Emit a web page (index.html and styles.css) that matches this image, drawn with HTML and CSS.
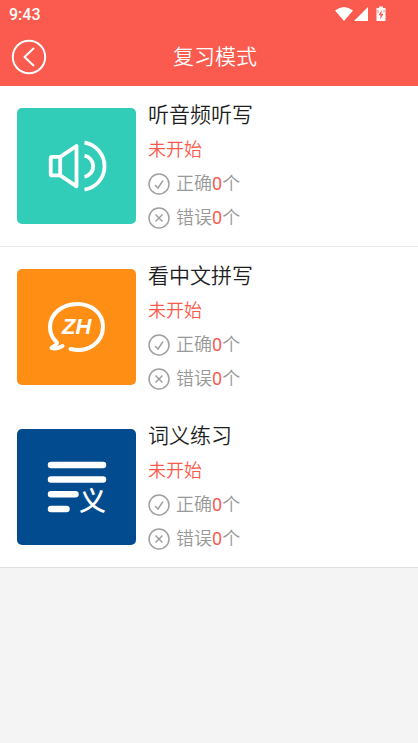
FILE: index.html
```html
<!DOCTYPE html>
<html lang="zh-CN">
<head>
<meta charset="utf-8">
<meta name="viewport" content="width=device-width, initial-scale=1">
<title>复习模式</title>
<link rel="stylesheet" href="styles.css">
</head>
<body>
<header class="header">
  <div class="status-bar">
    <span class="clock">9:43</span>
    <svg class="status-icons" width="54" height="18" viewBox="0 0 54 18" aria-hidden="true">
      <path d="M0 5.500Q9 -1.500 18 5.500L9 16Z" fill="#fff"/>
      <path d="M33 2V16H19Z" fill="#fff"/>
      <path d="M44 1.500h4v1.500h2.500v13h-9v-13H44Z" fill="#fff"/>
      <path d="M46.800 5L43.500 10.200h2.200L45 14.500L48.500 9h-2.200Z" fill="#fa5b4e"/>
      <path d="M43 5v3M49 5v2" stroke="#fa5b4e" stroke-width="0.800"/>
    </svg>
  </div>
  <div class="title-bar">
    <button class="back" type="button" aria-label="返回">
      <svg width="36" height="36" viewBox="0 0 36 36" fill="none" stroke="#fff" stroke-width="2" stroke-linecap="round" stroke-linejoin="round" aria-hidden="true">
        <circle cx="18" cy="18" r="16.200"/>
        <path d="M22.500 9.500L13.500 18L22.500 26.500"/>
      </svg>
    </button>
    <h1 class="title">复习模式</h1>
  </div>
</header>

<svg class="defs" aria-hidden="true">
  <symbol id="right" viewBox="0 0 22 22">
    <circle cx="11" cy="11" r="10"/>
    <path d="M7 12L10 15L15 7.500"/>
  </symbol>
  <symbol id="wrong" viewBox="0 0 22 22">
    <circle cx="11" cy="11" r="10"/>
    <path d="M7.500 7.500L14.500 14.500M14.500 7.500L7.500 14.500"/>
  </symbol>
</svg>

<main class="modes">
  <a class="mode mode-divided" href="#listen">
    <div class="tile tile-teal">
      <svg width="60" height="56" viewBox="0 0 60 56" fill="none" stroke="#fff" stroke-width="3.800" stroke-linejoin="round" aria-hidden="true">
        <rect x="3.700" y="18.900" width="9.500" height="18.500" rx="1.500"/>
        <path d="M13.200 18.900L29.500 8V48.300L13.200 37.400"/>
        <path d="M37.500 17.600A10.800 10.800 0 0 1 37.500 38.800M37.500 4.700A23.800 23.800 0 0 1 37.500 51.700"/>
      </svg>
    </div>
    <div class="info">
      <h2 class="name">听音频听写</h2>
      <p class="state">未开始</p>
      <p class="count"><svg class="mark" aria-hidden="true"><use href="#right"/></svg><span>正确<b class="number">0</b>个</span></p>
      <p class="count"><svg class="mark" aria-hidden="true"><use href="#wrong"/></svg><span>错误<b class="number">0</b>个</span></p>
    </div>
  </a>
  <a class="mode" href="#spell">
    <div class="tile tile-orange">
      <svg width="60" height="56" viewBox="0 0 60 56" fill="none" stroke="#fff" stroke-width="4" stroke-linecap="round" stroke-linejoin="round" aria-hidden="true">
        <path d="M23.500 50C42 54 56 43 56 27.500C56 14 44.500 5 30.500 5C15 5 3 15 3 28C3 34 5 39 10 43.500C10 46 7 47 4.500 49C8 50.500 12 49 15.500 47"/>
        <text class="tile-latin" x="15" y="35">ZH</text>
      </svg>
    </div>
    <div class="info">
      <h2 class="name">看中文拼写</h2>
      <p class="state">未开始</p>
      <p class="count"><svg class="mark" aria-hidden="true"><use href="#right"/></svg><span>正确<b class="number">0</b>个</span></p>
      <p class="count"><svg class="mark" aria-hidden="true"><use href="#wrong"/></svg><span>错误<b class="number">0</b>个</span></p>
    </div>
  </a>
  <a class="mode" href="#meaning">
    <div class="tile tile-blue">
      <svg class="tile-art" width="60" height="56" viewBox="0 0 60 56" fill="none" stroke="#fff" stroke-width="6.500" stroke-linecap="round" aria-hidden="true">
        <path d="M4 6H56M4 20.500H56M4 35.200H28.500M4 50H19.500"/>
        <text class="tile-hanzi" x="32" y="52">义</text>
      </svg>
    </div>
    <div class="info">
      <h2 class="name">词义练习</h2>
      <p class="state">未开始</p>
      <p class="count"><svg class="mark" aria-hidden="true"><use href="#right"/></svg><span>正确<b class="number">0</b>个</span></p>
      <p class="count"><svg class="mark" aria-hidden="true"><use href="#wrong"/></svg><span>错误<b class="number">0</b>个</span></p>
    </div>
  </a>
</main>
</body>
</html>
```
FILE: styles.css
```css
* {
  box-sizing: border-box;
}

body {
  margin: 0;
  background: #f4f4f4;
  font-family: Roboto, "Noto Sans CJK SC", sans-serif;
  font-weight: 350;
}

.header {
  background: #fa5b4e;
  color: #fff;
}

.status-bar {
  display: flex;
  align-items: center;
  justify-content: space-between;
  height: 28px;
  padding: 0 29px 0 9px;
}

.clock {
  font-size: 16px;
  font-weight: 500;
}

.title-bar {
  display: grid;
  grid-template-columns: 36px 1fr 24px;
  align-items: center;
  height: 58px;
  padding: 0 11px;
}

.back {
  width: 36px;
  height: 36px;
  padding: 0;
  border: 0;
  background: none;
  cursor: pointer;
}

.back svg {
  display: block;
}

.title {
  margin: 0;
  font-size: 21px;
  line-height: 30px;
  font-weight: 350;
  text-align: center;
}

.defs {
  display: none;
}

.modes {
  background: #fff;
  border-bottom: 1px solid #dedede;
}

.mode {
  display: flex;
  align-items: center;
  gap: 12px;
  padding: 11px 17px;
  color: inherit;
  text-decoration: none;
}

.mode-divided {
  border-bottom: 1px solid #e6e6e6;
}

.tile {
  display: flex;
  align-items: center;
  justify-content: center;
  width: 119px;
  height: 116px;
  border-radius: 5px;
}

.tile-teal {
  background: #32cdb9;
}

.tile-orange {
  background: #ff8e15;
}

.tile-blue {
  background: #034b8f;
}

.tile-art {
  overflow: visible;
}

.tile-latin {
  fill: #fff;
  stroke: none;
  font: italic 700 22px "Liberation Sans", sans-serif;
}

.tile-hanzi {
  fill: #fff;
  stroke: none;
  font: 500 27px "Noto Sans CJK SC", sans-serif;
}

.info {
  flex: 1;
}

.name,
.state,
.count {
  margin: 0;
  line-height: 34px;
}

.name {
  color: #1e1e1e;
  font-size: 21px;
  line-height: 36px;
  font-weight: 350;
}

.state {
  color: #fa5b4e;
  font-size: 18px;
}

.count {
  display: flex;
  align-items: center;
  gap: 6px;
  color: #999;
  font-size: 18px;
}

.mark {
  width: 22px;
  height: 22px;
  fill: none;
  stroke: #a0a0a0;
  stroke-width: 1.5px;
}

.number {
  color: #fa5b4e;
  font-weight: 400;
}
```
